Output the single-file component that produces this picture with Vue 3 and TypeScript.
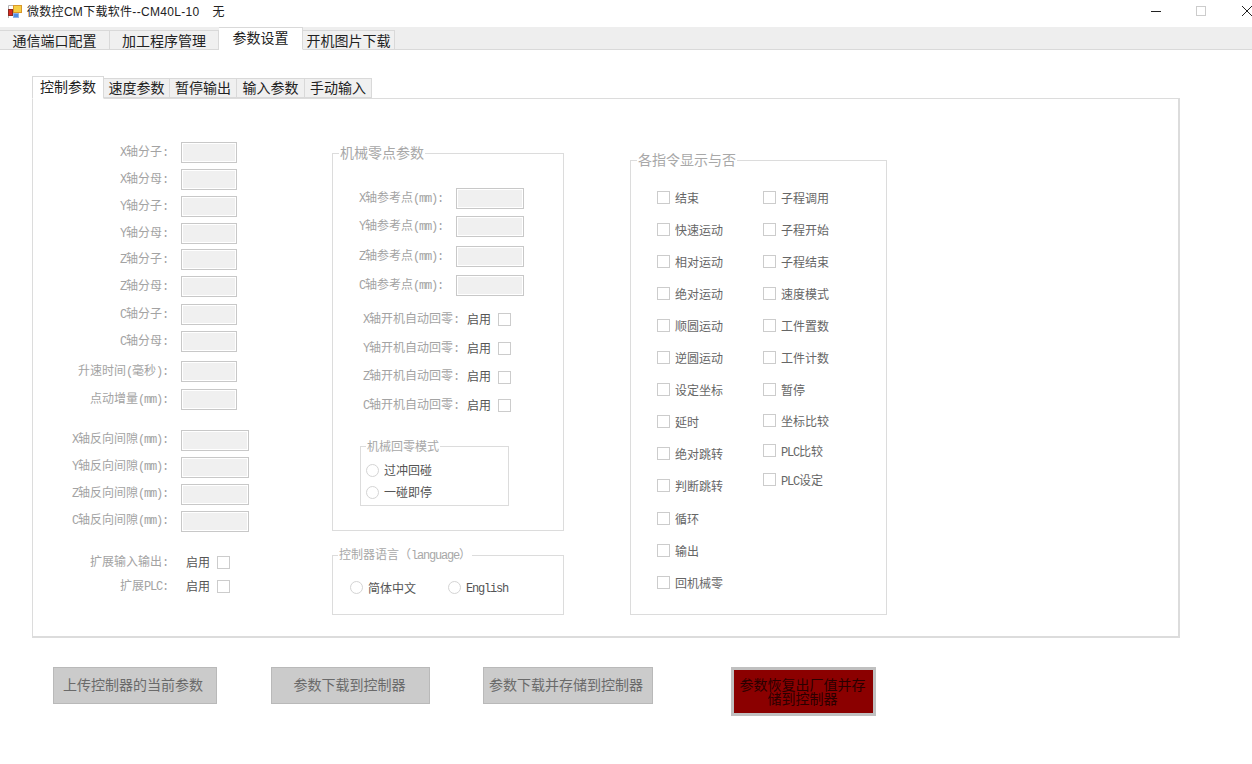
<script setup lang="ts">
import { h } from 'vue'

interface Row {
    label: string
    h: number
    wide?: boolean
}

// latin is squeezed to half width to get the look of the original font
const Txt = (props: { t: string }) =>
    props.t
        .split(/([A-Za-z0-9()\-:]+)/)
        .filter(Boolean)
        .map((s) => (/^[A-Za-z0-9()\-:]+$/.test(s) ? h('span', { class: 'lat' }, s) : s))
Txt.props = ['t']

const topTabs = [
    { name: '通信端口配置', w: 110 },
    { name: '加工程序管理', w: 109 },
    { name: '参数设置', w: 84, active: true },
    { name: '开机图片下载', w: 92 },
]
const subTabs = [
    { name: '控制参数', w: 72, active: true },
    { name: '速度参数', w: 66 },
    { name: '暂停输出', w: 67 },
    { name: '输入参数', w: 68 },
    { name: '手动输入', w: 67 },
]

const leftRows: Row[] = [
    { label: 'X轴分子:', h: 27 },
    { label: 'X轴分母:', h: 27 },
    { label: 'Y轴分子:', h: 27 },
    { label: 'Y轴分母:', h: 26 },
    { label: 'Z轴分子:', h: 27 },
    { label: 'Z轴分母:', h: 28 },
    { label: 'C轴分子:', h: 27 },
    { label: 'C轴分母:', h: 30 },
    { label: '升速时间(毫秒):', h: 28 },
    { label: '点动增量(mm):', h: 41 },
    { label: 'X轴反向间隙(mm):', h: 27, wide: true },
    { label: 'Y轴反向间隙(mm):', h: 27, wide: true },
    { label: 'Z轴反向间隙(mm):', h: 27, wide: true },
    { label: 'C轴反向间隙(mm):', h: 40, wide: true },
]
const leftChecks = [
    { label: '扩展输入输出:', h: 23 },
    { label: '扩展PLC:', h: 25 },
]

const zeroInputs = [
    { label: 'X轴参考点(mm):', h: 28 },
    { label: 'Y轴参考点(mm):', h: 30 },
    { label: 'Z轴参考点(mm):', h: 29 },
    { label: 'C轴参考点(mm):', h: 30 },
]
const zeroChecks = [
    { label: 'X轴开机自动回零:', h: 29 },
    { label: 'Y轴开机自动回零:', h: 29 },
    { label: 'Z轴开机自动回零:', h: 28 },
    { label: 'C轴开机自动回零:', h: 29 },
]

const cmdLeft = [
    '结束', '快速运动', '相对运动', '绝对运动', '顺圆运动', '逆圆运动', '设定坐标',
    '延时', '绝对跳转', '判断跳转', '循环', '输出', '回机械零',
].map((label, i) => ({ label, h: i === 9 ? 33 : 32 }))
const cmdRight = [
    { label: '子程调用', h: 32 },
    { label: '子程开始', h: 32 },
    { label: '子程结束', h: 32 },
    { label: '速度模式', h: 32 },
    { label: '工件置数', h: 32 },
    { label: '工件计数', h: 32 },
    { label: '暂停', h: 31 },
    { label: '坐标比较', h: 30 },
    { label: 'PLC比较', h: 29 },
    { label: 'PLC设定', h: 29 },
]
</script>

<template>
    <div class="app">
        <div class="titlebar">
            <svg class="app-icon" width="14" height="14" viewBox="0 0 14 14">
                <path d="M0.5 13V0.5H13" fill="none" stroke="#b5b5b5" />
                <rect x="5.5" y="0.5" width="8" height="7" fill="#f6cf45" stroke="#d9982a" />
                <rect x="0.5" y="4.5" width="4" height="6" fill="#d9281e" stroke="#8c2a20" />
                <rect x="5.5" y="8.5" width="5" height="4" fill="#4f8fe6" stroke="#8fb4e8" />
            </svg>
            <span class="title-text">微数控CM下载软件--CM40L-10</span>
            <span class="title-extra">无</span>
            <div class="win-btns">
                <i class="win-min"></i>
                <i class="win-max"></i>
                <svg class="win-close" width="10" height="10" viewBox="0 0 10 10">
                    <path d="M0 0L10 10M10 0L0 10" stroke="#222" stroke-width="1" />
                </svg>
            </div>
        </div>

        <div class="top-tabs">
            <div
                v-for="t in topTabs"
                :key="t.name"
                class="top-tab"
                :class="{ active: t.active }"
                :style="{ width: t.w + 'px' }"
            >{{ t.name }}</div>
        </div>

        <div class="page">
            <div class="sub-tabs">
                <div
                    v-for="t in subTabs"
                    :key="t.name"
                    class="sub-tab"
                    :class="{ active: t.active }"
                    :style="{ width: t.w + 'px' }"
                >{{ t.name }}</div>
            </div>

            <div class="panel">
                <div class="col-left">
                    <div v-for="r in leftRows" :key="r.label" class="row" :style="{ height: r.h + 'px' }">
                        <label class="lbl lbl-left" :class="{ 'lbl-wide': r.wide }"><Txt :t="r.label" /></label>
                        <div class="input" :class="{ wide: r.wide }"></div>
                    </div>
                    <div v-for="r in leftChecks" :key="r.label" class="row check-row" :style="{ height: r.h + 'px' }">
                        <label class="lbl lbl-left"><Txt :t="r.label" /></label>
                        <span class="on on-left">启用</span>
                        <i class="box"></i>
                    </div>
                </div>

                <div class="col-mid">
                    <fieldset class="group zero">
                        <legend class="legend-big">机械零点参数</legend>
                        <div v-for="r in zeroInputs" :key="r.label" class="row" :style="{ height: r.h + 'px' }">
                            <label class="lbl lbl-zero"><Txt :t="r.label" /></label>
                            <div class="input wide"></div>
                        </div>
                        <div v-for="r in zeroChecks" :key="r.label" class="row check-row" :style="{ height: r.h + 'px' }">
                            <label class="lbl lbl-zero-check"><Txt :t="r.label" /></label>
                            <span class="on on-zero">启用</span>
                            <i class="box"></i>
                        </div>
                        <fieldset class="group mode">
                            <legend class="legend-small">机械回零模式</legend>
                            <div class="radio-line"><i class="radio"></i><span>过冲回碰</span></div>
                            <div class="radio-line"><i class="radio"></i><span>一碰即停</span></div>
                        </fieldset>
                    </fieldset>

                    <fieldset class="group lang">
                        <legend class="legend-small">控制器语言（<span class="lat">language</span>）</legend>
                        <div class="lang-row">
                            <div class="radio-line lang-cn"><i class="radio"></i><span>简体中文</span></div>
                            <div class="radio-line"><i class="radio"></i><span class="lat en">English</span></div>
                        </div>
                    </fieldset>
                </div>

                <fieldset class="group cmds">
                    <legend class="legend-big">各指令显示与否</legend>
                    <div class="cmd-cols">
                        <div class="cmd-col">
                            <div v-for="c in cmdLeft" :key="c.label" class="cmd" :style="{ height: c.h + 'px' }">
                                <i class="box"></i><span><Txt :t="c.label" /></span>
                            </div>
                        </div>
                        <div class="cmd-col">
                            <div v-for="c in cmdRight" :key="c.label" class="cmd" :style="{ height: c.h + 'px' }">
                                <i class="box"></i><span><Txt :t="c.label" /></span>
                            </div>
                        </div>
                    </div>
                </fieldset>
            </div>

            <div class="actions">
                <button class="btn b1">上传控制器的当前参数</button>
                <button class="btn b2">参数下载到控制器</button>
                <button class="btn b3">参数下载并存储到控制器</button>
                <button class="btn danger">参数恢复出厂值并存储到控制器</button>
            </div>
        </div>
    </div>
</template>

<style scoped>
.app {
    width: 1252px;
    height: 764px;
    overflow: hidden;
    background: #fff;
    color: #000;
    font-family: "Noto Sans CJK SC", "Liberation Sans", sans-serif;
    font-size: 12px;
}

.titlebar {
    display: flex;
    align-items: center;
    height: 27px;
    padding: 0 0 6px 8px;
    box-sizing: border-box;
}

.app-icon {
    margin: 3px 5px 0 0;
    flex: none;
}

.title-text {
    font-family: "Liberation Sans", "Noto Sans CJK SC", sans-serif;
    letter-spacing: 0.3px;
    color: #222;
}

.title-extra {
    margin-left: 13px;
    color: #222;
}

.win-btns {
    align-self: flex-start;
    margin: 6px 0 0 auto;
    height: 10px;
    display: flex;
    align-items: center;
}

.win-min {
    width: 10px;
    height: 1px;
    background: #222;
}

.win-max {
    width: 10px;
    height: 10px;
    margin-left: 35px;
    box-sizing: border-box;
    border: 1px solid #ccc;
}

.win-close {
    margin-left: 36px;
}

.top-tabs {
    display: flex;
    align-items: flex-end;
    height: 23px;
    box-sizing: border-box;
    background: #eee;
    border-bottom: 1px solid #d9d9d9;
}

.top-tab {
    box-sizing: border-box;
    height: 20px;
    line-height: 18px;
    margin-bottom: -1px;
    font-size: 14px;
    text-align: center;
    color: #222;
    background: #f0f0f0;
    border: 1px solid #d9d9d9;
    border-left: 0;
}

.top-tab.active {
    height: 23px;
    line-height: 19px;
    background: #fff;
    border-bottom-color: #fff;
    border-top: 1px solid #d9d9d9;
}

.page {
    padding: 26px 0 0 32px;
}

.sub-tabs {
    display: flex;
    align-items: flex-end;
    height: 22px;
    position: relative;
}

.sub-tab {
    box-sizing: border-box;
    height: 20px;
    line-height: 16px;
    font-size: 14px;
    text-align: center;
    color: #222;
    background: #f0f0f0;
    border: 1px solid #d9d9d9;
    border-left: 0;
}

.sub-tab.active {
    height: 23px;
    margin-bottom: -1px;
    line-height: 18px;
    background: #fff;
    border-left: 1px solid #d9d9d9;
    border-bottom-color: #fff;
    position: relative;
    z-index: 1;
}

.panel {
    display: flex;
    align-items: flex-start;
    box-sizing: border-box;
    width: 1148px;
    height: 540px;
    border: 1px solid #dcdcdc;
    border-right-width: 2px;
    border-bottom-width: 2px;
}

.col-left {
    width: 299px;
    flex: none;
    padding-top: 43px;
}

.col-mid {
    width: 298px;
    flex: none;
    padding-top: 44px;
}

.row {
    display: flex;
    align-items: flex-start;
}

.lbl {
    flex: none;
    text-align: right;
    line-height: 18px;
    color: #a3a3a3;
    white-space: nowrap;
}

.lbl-left {
    width: 135px;
    margin-right: 13px;
}

.lbl-wide {
    line-height: 16px;
}

.lbl-zero {
    width: 110px;
    margin-right: 13px;
}

.lbl-zero-check {
    width: 126px;
    margin-right: 8px;
}

.input {
    flex: none;
    box-sizing: border-box;
    width: 56px;
    height: 21px;
    background: #f0f0f0;
    border: 1px solid #c8c8c8;
    box-shadow: inset 0 0 0 1px #fff;
}

.input.wide {
    width: 68px;
}

.check-row {
    align-items: center;
}

.check-row .lbl,
.check-row .on {
    margin-bottom: 2px;
}

.on {
    color: #555;
    line-height: 18px;
}

.on-left {
    margin-right: 7px;
    margin-left: 5px;
}

.on-zero {
    margin-right: 7px;
}

.box {
    flex: none;
    display: block;
    box-sizing: border-box;
    width: 13px;
    height: 13px;
    background: #fff;
    border: 1px solid #ccc;
}

.group {
    margin: 0;
    padding: 0;
    box-sizing: border-box;
    min-width: 0;
    border: 1px solid #dcdcdc;
}

.legend-big {
    margin-left: 6px;
    padding: 0 1px 2px;
    font-size: 14px;
    line-height: 18px;
    color: #a8a8a8;
}

.legend-small {
    margin-left: 5px;
    padding: 0 1px;
    font-size: 12px;
    line-height: 16px;
    color: #a8a8a8;
}

.zero {
    width: 232px;
    height: 388px;
    padding: 25px 0 0 0;
}

.mode {
    width: 149px;
    height: 68px;
    margin: 18px 0 0 27px;
    padding-top: 5px;
}

.mode .radio-line span {
    margin-bottom: 2px;
}

.radio-line {
    display: flex;
    align-items: center;
    height: 22px;
    padding-left: 5px;
    color: #555;
}

.radio {
    flex: none;
    display: block;
    box-sizing: border-box;
    width: 13px;
    height: 13px;
    margin-right: 5px;
    border: 1px solid #d4d4d4;
    border-radius: 50%;
    background: #fff;
}

.lang {
    width: 232px;
    height: 69px;
    margin-top: 15px;
}

.lang-row {
    display: flex;
    padding: 12px 0 0 12px;
}

.lang-cn {
    width: 93px;
}

.en {
    margin-top: 4px;
}

.cmds {
    width: 257px;
    height: 465px;
    margin-top: 51px;
}

.cmd-cols {
    display: flex;
    padding: 21px 0 0 26px;
}

.cmd-col {
    width: 106px;
}

.cmd {
    display: flex;
    align-items: flex-start;
    color: #666;
}

.cmd span {
    margin-left: 5px;
    line-height: 13px;
}

.actions {
    display: flex;
    align-items: flex-start;
    margin-top: 29px;
    padding-left: 21px;
}

.btn {
    box-sizing: border-box;
    height: 37px;
    padding: 0 0 3px;
    font: inherit;
    font-size: 14px;
    color: #6a6a6a;
    background: #cbcbcb;
    border: 1px solid #b9b9b9;
}

.b1 {
    width: 164px;
    padding-right: 4px;
}

.b2 {
    width: 159px;
    margin-left: 54px;
    padding-right: 2px;
}

.b3 {
    width: 170px;
    margin-left: 53px;
    padding-right: 4px;
}

.danger {
    width: 145px;
    height: 49px;
    margin-left: 78px;
    padding: 0 6px 2px 4px;
    line-height: 14px;
    color: #2a0000;
    background: #8b0000;
    border: 3px solid #c0c0c0;
}
</style>

<style>
.lat {
    font-family: "Liberation Mono", monospace;
    font-size: 12px;
    letter-spacing: -1.2px;
}
</style>
